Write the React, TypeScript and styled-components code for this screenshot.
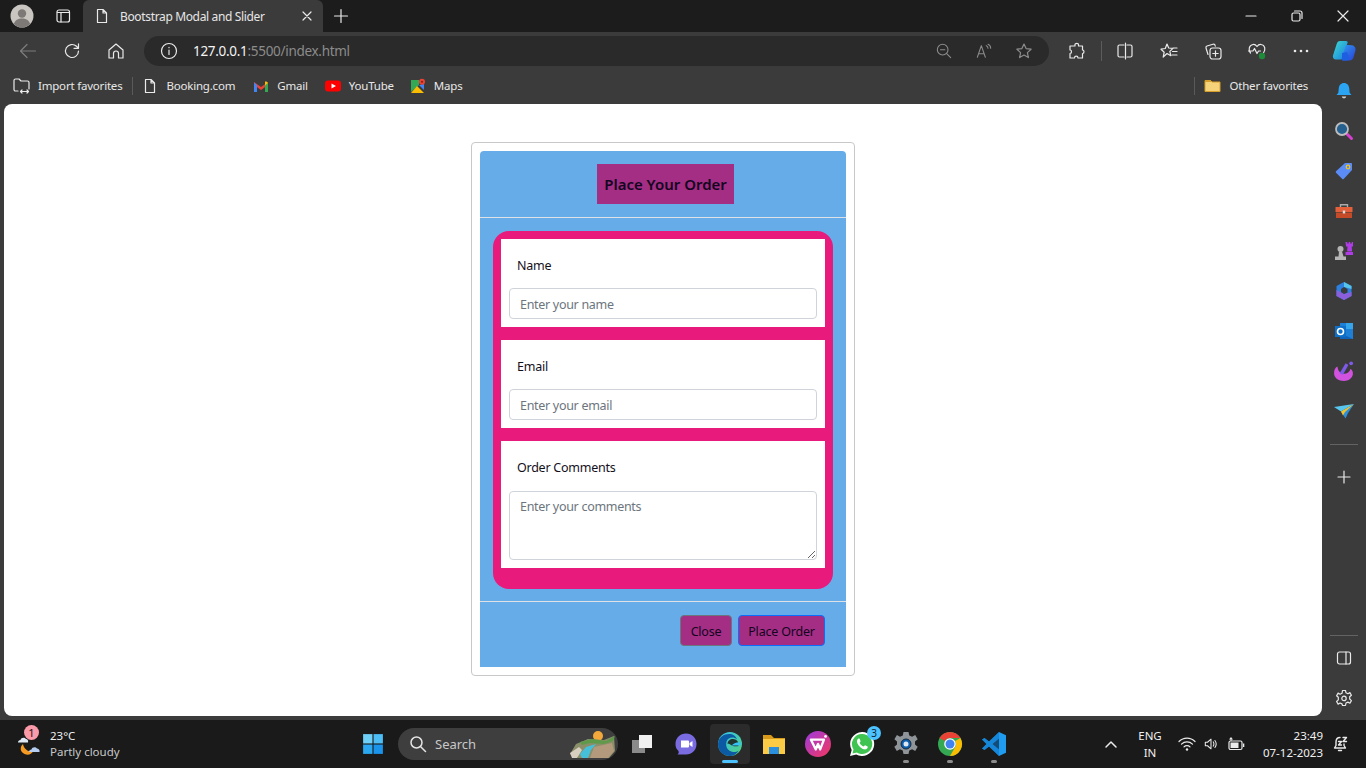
import React from 'react';
import styled, { createGlobalStyle } from 'styled-components';

const GlobalStyle = createGlobalStyle`
  html, body {
    margin: 0;
    padding: 0;
    background: #3b3b3b;
  }
  * {
    box-sizing: border-box;
  }
`;

const UI_FONT = `"Noto Sans", "Open Sans", "Liberation Sans", sans-serif`;

const Screen = styled.div`
  display: flex;
  flex-direction: column;
  width: 1366px;
  height: 768px;
  overflow: hidden;
  font-family: ${UI_FONT};
  color: #eee;
  background: #3b3b3b;
`;

/* title bar */
const TitleBar = styled.div`
  display: flex;
  align-items: flex-end;
  height: 32px;
  background: #1c1c1c;
`;

const TitleSlot = styled.div<{ $w: number }>`
  display: flex;
  align-items: center;
  justify-content: center;
  flex: none;
  width: ${p => p.$w}px;
  height: 32px;
`;

const Tab = styled.div`
  display: flex;
  align-items: center;
  flex: none;
  width: 240px;
  height: 32px;
  margin-left: 1px;
  padding: 0 9px 0 11px;
  background: #3b3b3b;
  border-radius: 6px 6px 0 0;
`;

const TabTitle = styled.span`
  flex: 1;
  margin-left: 10px;
  font-size: 12px;
  letter-spacing: -0.35px;
  color: #e6e6e6;
  white-space: nowrap;
`;

const Spacer = styled.div`
  flex: 1;
`;

/* nav bar */
const NavBar = styled.div`
  display: flex;
  align-items: center;
  height: 40px;
  padding: 0 0 2px 6px;
  background: #3b3b3b;
`;

const NavButton = styled.div<{ $w?: number }>`
  display: flex;
  align-items: center;
  justify-content: center;
  flex: none;
  width: ${p => p.$w ?? 44}px;
  height: 32px;
`;

const AddressBar = styled.div`
  display: flex;
  align-items: center;
  flex: none;
  width: 905px;
  height: 30px;
  margin-left: 6px;
  padding-left: 16px;
  background: #2a2a2a;
  border-radius: 15px;
`;

const Url = styled.div`
  flex: 1;
  margin-left: 15px;
  font-size: 13.5px;
  letter-spacing: -0.3px;
  color: #8c8c8c;
  white-space: nowrap;
`;

const UrlHost = styled.span`
  color: #f4f4f4;
`;

const AddressIcon = styled.div`
  display: flex;
  align-items: center;
  justify-content: center;
  width: 40px;
  height: 30px;
`;

const ToolDivider = styled.div`
  flex: none;
  width: 1px;
  height: 20px;
  background: #5c5c5c;
`;

/* area under the nav bar */
const Middle = styled.div`
  display: flex;
  height: 648px;
`;

const MainColumn = styled.div`
  display: flex;
  flex-direction: column;
  width: 1322px;
`;

const FavBar = styled.div`
  display: flex;
  align-items: center;
  height: 27px;
  margin-bottom: 5px;
  padding: 0 14px 0 13px;
  font-size: 11.5px;
  letter-spacing: -0.2px;
  color: #e8e8e8;
`;

const FavItem = styled.div<{ $ml?: number }>`
  display: flex;
  align-items: center;
  gap: 8px;
  margin-left: ${p => p.$ml ?? 0}px;
  white-space: nowrap;
`;

const FavDivider = styled.div<{ $ml: number }>`
  width: 1px;
  height: 18px;
  margin-left: ${p => p.$ml}px;
  background: #5a5a5a;
`;

const Page = styled.div`
  display: flex;
  justify-content: center;
  align-items: flex-start;
  width: 1318px;
  height: 612px;
  margin-left: 4px;
  padding-top: 38px;
  background: #fff;
  border-radius: 8px;
`;

/* the order modal */
const Modal = styled.div`
  width: 384px;
  height: 534px;
  padding: 8px;
  background: #fff;
  border: 1px solid #c8c8c8;
  border-radius: 4px;
`;

const ModalInner = styled.div`
  display: flex;
  flex-direction: column;
  height: 516px;
  background: #66ace9;
  border-radius: 4px 4px 0 0;
`;

const ModalHeader = styled.div`
  display: flex;
  justify-content: center;
  flex: none;
  height: 67px;
  padding: 13px 0 0 5px;
  border-bottom: 1px solid #dee2e6;
`;

const ModalTitle = styled.h5`
  display: flex;
  align-items: center;
  justify-content: center;
  width: 137px;
  height: 40px;
  margin: 0;
  font-size: 15px;
  font-weight: 600;
  color: #14051f;
  background: #a32e84;
  white-space: nowrap;
`;

const ModalBody = styled.div`
  flex: none;
  height: 384px;
  padding: 13px 13px 12px;
  border-bottom: 1px solid #dee2e6;
`;

const Panel = styled.form`
  display: flex;
  flex-direction: column;
  gap: 13px;
  height: 358px;
  padding: 8px;
  background: #e81b7d;
  border-radius: 16px;
`;

const Field = styled.div`
  padding: 8px;
  background: #fff;
`;

const FieldLabel = styled.label`
  display: block;
  height: 20px;
  margin: 9px 8px 12px;
  font-size: 12.5px;
  line-height: 20px;
  letter-spacing: -0.25px;
  color: #14101a;
`;

const CommentsLabel = styled(FieldLabel)`
  margin-bottom: 13px;
`;

const TextInput = styled.input`
  display: block;
  width: 100%;
  height: 31px;
  padding: 2px 10px 0;
  font-family: ${UI_FONT};
  font-size: 12.5px;
  letter-spacing: -0.3px;
  color: #212529;
  background: #fff;
  border: 1px solid #ced4da;
  border-radius: 4px;
  outline: none;

  &::placeholder {
    color: #6c757d;
  }
`;

const CommentsInput = styled.textarea`
  display: block;
  width: 100%;
  height: 69px;
  padding: 6px 10px;
  font-family: ${UI_FONT};
  font-size: 12.5px;
  letter-spacing: -0.3px;
  color: #212529;
  background: #fff;
  border: 1px solid #ced4da;
  border-radius: 4px;
  outline: none;

  &::placeholder {
    color: #6c757d;
  }
`;

const ModalFooter = styled.div`
  display: flex;
  justify-content: flex-end;
  align-items: flex-start;
  gap: 6px;
  padding: 13px 21px 0 0;
`;

const OrderButton = styled.button<{ $w: number; $edge: string }>`
  width: ${p => p.$w}px;
  height: 31px;
  padding: 1px 0 0;
  font-family: ${UI_FONT};
  font-size: 12.5px;
  letter-spacing: -0.2px;
  color: #14051f;
  background: #a32e84;
  border: 1px solid ${p => p.$edge};
  border-radius: 4px;
`;

/* edge sidebar */
const Sidebar = styled.div`
  display: flex;
  flex-direction: column;
  justify-content: space-between;
  width: 44px;
  margin-top: -1px;
  padding-bottom: 2px;
`;

const SideGroup = styled.div`
  display: flex;
  flex-direction: column;
  align-items: center;
`;

const SideButton = styled.div`
  display: flex;
  align-items: center;
  justify-content: center;
  width: 44px;
  height: 40px;
`;

const SideDivider = styled.div<{ $mt: number; $mb: number }>`
  width: 28px;
  height: 1px;
  margin: ${p => p.$mt}px 0 ${p => p.$mb}px;
  background: #636363;
`;

/* windows taskbar */
const Taskbar = styled.div`
  display: flex;
  align-items: center;
  height: 48px;
  background: #1a1a1a;
`;

const Weather = styled.div`
  display: flex;
  align-items: center;
  flex: none;
  width: 351px;
  padding-left: 17px;
`;

const WeatherIcon = styled.div`
  position: relative;
  width: 28px;
  height: 28px;
`;

const AlertBadge = styled.span`
  position: absolute;
  top: -5px;
  left: 7px;
  width: 15px;
  height: 15px;
  font-size: 11px;
  line-height: 15px;
  text-align: center;
  color: #2a1015;
  background: #fb9aa8;
  border-radius: 50%;
`;

const WeatherText = styled.div`
  margin-left: 5px;
  font-size: 11.5px;
  line-height: 16px;
  color: #f0f0f0;
`;

const WeatherSub = styled.div`
  color: #c8c8c8;
`;

const TaskIcon = styled.div<{ $active?: boolean }>`
  position: relative;
  display: flex;
  align-items: center;
  justify-content: center;
  flex: none;
  width: ${p => (p.$active ? 40 : 44)}px;
  height: 40px;
  margin: 0 ${p => (p.$active ? 2 : 0)}px;
  background: ${p => (p.$active ? '#2b2b2b' : 'transparent')};
  border-radius: 4px;
`;

const RunDot = styled.span<{ $active?: boolean }>`
  position: absolute;
  bottom: 1px;
  left: 50%;
  width: ${p => (p.$active ? 16 : 6)}px;
  height: 3px;
  margin-left: ${p => (p.$active ? -8 : -3)}px;
  background: ${p => (p.$active ? '#4cc2ff' : '#8c8c8c')};
  border-radius: 2px;
`;

const CountBadge = styled.span`
  position: absolute;
  top: 2px;
  right: 3px;
  width: 14px;
  height: 14px;
  font-size: 10px;
  line-height: 14px;
  text-align: center;
  color: #10212e;
  background: #4cc2ff;
  border-radius: 50%;
`;

const SearchBox = styled.div`
  display: flex;
  align-items: center;
  flex: none;
  width: 220px;
  height: 32px;
  margin: 0 2px 0 3px;
  padding: 0 2px 0 11px;
  background: #3e3e3e;
  border-radius: 16px;
`;

const SearchLabel = styled.span`
  flex: 1;
  margin-left: 8px;
  font-size: 13px;
  color: #c8c8c8;
`;

const Tray = styled.div`
  display: flex;
  align-items: center;
  flex: 1;
  padding-left: 87px;
`;

const LangBox = styled.div`
  width: 40px;
  margin-left: 11px;
  font-size: 11.5px;
  line-height: 17px;
  text-align: center;
  color: #f0f0f0;
`;

const Clock = styled.div`
  width: 69px;
  font-size: 11.5px;
  line-height: 17px;
  text-align: right;
  color: #f0f0f0;
`;

const TrayIcon = styled.div<{ $w: number }>`
  display: flex;
  align-items: center;
  justify-content: center;
  flex: none;
  width: ${p => p.$w}px;
`;

/* icons */
const line = { fill: 'none', stroke: '#eaeaea', strokeWidth: 1.2, strokeLinecap: 'round', strokeLinejoin: 'round' } as const;
const dimLine = { ...line, stroke: '#8c8c8c' };

const DocIcon = () => (
  <svg width="16" height="16" viewBox="0 0 16 16">
    <path {...line} d="M3.500 1.500h5.500l3.500 3.500v9.500h-9zM9 1.500v3.500h3.500" />
  </svg>
);

const Avatar = () => (
  <svg width="24" height="24" viewBox="0 0 24 24">
    <circle cx="12" cy="12" r="11.500" fill="#c9c5c1" />
    <circle cx="12" cy="9.500" r="4.200" fill="#7d7976" />
    <path fill="#7d7976" d="M3.800 20c1.200-4 4.400-5.600 8.200-5.600s7 1.600 8.200 5.600a11.500 11.500 0 0 1-16.400 0z" />
  </svg>
);

const StarPath = 'M9 2l2.100 4.600 5 .6-3.700 3.400 1 5L9 13.100l-4.400 2.500 1-5L1.900 7.200l5-.6z';

const CopilotLogo = () => (
  <svg width="26" height="26" viewBox="0 0 26 26">
    <defs>
      <linearGradient id="cpA" x1="0" y1="0" x2="1" y2="1">
        <stop offset="0" stopColor="#3ddbd0" />
        <stop offset="1" stopColor="#1a7de0" />
      </linearGradient>
      <linearGradient id="cpB" x1="0" y1="0" x2="1" y2="1">
        <stop offset="0" stopColor="#2f9cf0" />
        <stop offset="1" stopColor="#2a3fd8" />
      </linearGradient>
    </defs>
    <path fill="url(#cpA)" d="M9 3h6c1.500 0 2 1 1.500 2l-5 15c-.4 1-1.200 1.500-2.500 1.500H5c-2.500 0-3.500-2-3-4l3.500-11C6 4 7.500 3 9 3z" />
    <path fill="url(#cpB)" d="M15 7h3l2 .2c3 0 5 2 4.500 5l-2 7c-.6 2.300-2 3.300-4 3.300h-6c-1.500 0-2.300-1-2-2.200z" />
    <path fill="#1e5ee0" d="M11 15l5-1 2 5c.5 2-.5 3.500-2.500 3.500H11z" />
  </svg>
);

const Bell = () => (
  <svg width="18" height="18" viewBox="0 0 20 20">
    <path fill="#2ba4f3" d="M10 1c3.500 0 5.500 2.500 5.800 6l.5 5 2 2.500H1.700l2-2.500.5-5C4.500 3.500 6.500 1 10 1z" />
    <path fill="#cfcfcf" d="M7.500 16.200h5a2.500 2 0 0 1-5 0z" />
  </svg>
);

const Lens = () => (
  <svg width="20" height="20" viewBox="0 0 20 20">
    <path stroke="#d63fd0" strokeWidth="3" strokeLinecap="round" d="M12.500 12.500l5 5" />
    <circle cx="8" cy="8" r="6" fill="#25608f" stroke="#bdbdbd" strokeWidth="1.800" />
  </svg>
);

const Tag = () => (
  <svg width="20" height="20" viewBox="0 0 20 20">
    <path fill="#5b8cf5" d="M11 2h6c.6 0 1 .4 1 1v6L9.700 18c-.4.4-1 .4-1.400 0L2 11.700c-.4-.4-.4-1 0-1.400z" />
    <circle cx="14" cy="6" r="1.800" fill="#5b8cf5" stroke="#f5c518" strokeWidth="1.200" />
  </svg>
);

const Toolbox = () => (
  <svg width="20" height="20" viewBox="0 0 20 20">
    <path fill="none" stroke="#aaa" strokeWidth="1.400" d="M6.500 6V3.800h7V6" />
    <path fill="#e2603a" d="M1.500 6h17v5h-17z" />
    <path fill="#c44a28" d="M2 11.500h16V17H2z" />
    <path fill="#ddd" d="M8.800 9.500h2.400v3H8.800z" />
  </svg>
);

const Chess = () => (
  <svg width="20" height="20" viewBox="0 0 20 20">
    <circle cx="6.500" cy="8" r="3" fill="#b5b5b5" />
    <path fill="#b5b5b5" d="M5 10.500h3l1.500 5h-5zM1 15.500h11V19H1z" />
    <path fill="#b03ce8" d="M11.500 1h1.800v1.600h1.400V1h1.600v1.600h1.400V1H19v4.500h-1.300l.4 5h-5l.4-5h-1.500zM11.500 11H19v3h-7.500z" />
  </svg>
);

const M365 = () => (
  <svg width="20" height="20" viewBox="0 0 20 20">
    <path fill="#2d7fe0" d="M10 1l7.500 4v10l-7.500 4-7.500-4V5z" />
    <path fill="#8b5fdc" d="M2.500 9l7.500 4 7.500-2v4L10 19l-7.500-4z" />
    <path fill="#55c4e8" d="M10 1l7.500 4v3L10 6z" />
    <path fill="#3b3b3b" d="M7 8l3-2 3.500 2v3.500L10 13l-3-2z" />
  </svg>
);

const Outlook = () => (
  <svg width="20" height="20" viewBox="0 0 20 20">
    <path fill="#1d7fd6" d="M6 2h13v16H6z" />
    <path fill="#36a6ec" d="M12 2h7v6h-7z" />
    <path fill="#0f63b8" d="M6 12l13 6H6z" />
    <path fill="#0e6fc9" d="M1 5h11v11H1z" />
    <circle cx="6.500" cy="10.500" r="3" fill="none" stroke="#fff" strokeWidth="1.600" />
  </svg>
);

const Designer = () => (
  <svg width="22" height="22" viewBox="0 0 20 20">
    <path fill="#d252e0" d="M1 12c0-3 1-5 3-6 .5 4 2.500 6.500 6 6.500 3 0 5-1.500 6-4.500 1.500 1.500 2.500 3 2 5.500-.8 3.500-4 5.500-8 5.500-5 0-9-2.500-9-7z" />
    <path fill="#7f5ae8" d="M6 12L11.500 3l2.500 1.500L9 13.500z" />
    <circle cx="16.500" cy="3" r="1.700" fill="#7f5ae8" />
  </svg>
);

const Plane = () => (
  <svg width="22" height="20" viewBox="0 0 22 20">
    <path fill="#58c7f0" d="M1 6L21 3 8 10.500z" />
    <path fill="#2c8fdc" d="M21 3l-6 9-2.500 5.500L8 10.500z" />
    <path fill="#f5c32c" d="M21 3L8 10.500l2 4L12 11z" />
  </svg>
);

const WeatherArt = () => (
  <svg width="28" height="28" viewBox="0 0 28 28">
    <path fill="#f59a23" d="M6 14c1 5 5 8 10 7.500-1.500 3-5 4-8.500 2.500C3 22 2.500 17 6 14z" />
    <path fill="#dfe8f5" d="M1 12.500c0-1.500 1-2.500 2.500-2.500.5-2.500 4-3.200 5.500-1 1.500 0 2.500 1.500 2 3.500z" />
    <path fill="#b5cdf0" d="M12 22c0-1.500 1-2.500 2.500-2.500.5-2.500 4-3 5.500-1 1.500 0 3 1.500 2.500 3.500z" />
  </svg>
);

const StartLogo = () => (
  <svg width="22" height="22" viewBox="0 0 20 20">
    <path fill="#6fd0f7" d="M1 1h8.500v8.500H1z" />
    <path fill="#4cbdf5" d="M10.500 1H19v8.500h-8.500z" />
    <path fill="#2aa7ef" d="M1 10.500h8.500V19H1z" />
    <path fill="#1a93ea" d="M10.500 10.500H19V19h-8.500z" />
  </svg>
);

const Scenery = () => (
  <svg width="48" height="30" viewBox="0 0 48 30">
    <circle cx="30" cy="7" r="5" fill="#f2a83a" />
    <path fill="#8a8f6a" d="M2 25L8 15l12-5 16 1 10-4 1 15-6 7H10z" />
    <path fill="#5e9a4a" d="M12 13l12-3 14 2 9-5-2 5-9 3-14-1-8 2z" />
    <path fill="#46c0d8" d="M12 25l6-7 10-3-5 6-3 8h-6z" />
    <path fill="#b49a7c" d="M26 18l18-4 2 8-6 7H22z" />
    <path fill="#d8cfc0" d="M2 24l9-6 3 3-5 8H4z" />
  </svg>
);

const TaskView = () => (
  <svg width="24" height="24" viewBox="0 0 24 24">
    <path fill="#8a8a8a" d="M2 8h13v13H2z" />
    <path fill="#f0f0f0" d="M9 3h13v13H9z" />
  </svg>
);

const MeetIcon = () => (
  <svg width="24" height="24" viewBox="0 0 24 24">
    <path fill="#7a6be0" d="M12 1.500c6 0 10.500 4.500 10.500 10.500S18 22.500 12 22.500H3.500c2-1.800 1.500-3-.3-5C1.800 15.800 1.500 14 1.500 12 1.500 6 6 1.500 12 1.500z" />
    <path fill="#fff" d="M7 8.500h7a1 1 0 0 1 1 1v5a1 1 0 0 1-1 1H7zM15.500 11l3-2v6l-3-2z" />
  </svg>
);

const EdgeLogo = () => (
  <svg width="26" height="26" viewBox="0 0 26 26">
    <defs>
      <linearGradient id="edA" x1="0" y1="0" x2="1" y2="1">
        <stop offset="0" stopColor="#35c1f1" />
        <stop offset="1" stopColor="#52d17c" />
      </linearGradient>
    </defs>
    <circle cx="13" cy="13" r="12" fill="url(#edA)" />
    <path fill="#0c59a4" d="M1 13C1.500 6 7 3 12 3c4 0 7 2 8 5.500-3-3-9-2.500-10.500 2-1.500 5 1.500 10 6.500 10.500 2 .2 4-.2 5.500-1.200C19 24 15.500 25 13 25 6 25 1 20 1 13z" />
    <path fill="#1a1a1a" d="M10.500 13c0-3 2.500-5 5.500-5 2 0 4 1 5 3l.5 4c-2 .5-6 .5-7.500-1-1.500-1.500-3.500-1.500-3.500-1z" opacity="0.85" />
    <path fill="#35c1f1" d="M14.500 14.500h9c.5-.8.5-2 .2-3-2-.5-6-.5-9.200 3z" />
  </svg>
);

const FolderIcon = () => (
  <svg width="26" height="26" viewBox="0 0 26 26">
    <path fill="#d99a1c" d="M2 4h8l3 3h11v3H2z" />
    <path fill="#fbcb45" d="M2 8h22v15H2z" />
    <path fill="#2b8fe0" d="M8 16h10v7H8z" />
  </svg>
);

const WpsIcon = () => (
  <svg width="26" height="26" viewBox="0 0 24 24">
    <defs>
      <linearGradient id="wps" x1="0" y1="0" x2="1" y2="1">
        <stop offset="0" stopColor="#9a3be0" />
        <stop offset="1" stopColor="#f5365c" />
      </linearGradient>
    </defs>
    <circle cx="12" cy="12" r="12" fill="url(#wps)" />
    <path fill="none" stroke="#fff" strokeWidth="2.200" strokeLinejoin="round" d="M5.500 8h12l-3.500 9-2-5-2 5z" />
    <circle cx="19" cy="5" r="1.300" fill="#fff" />
  </svg>
);

const WhatsappIcon = () => (
  <svg width="26" height="26" viewBox="0 0 26 26">
    <path fill="#fff" d="M13 1a12 12 0 0 0-10.300 18L1 25l6.200-1.600A12 12 0 1 0 13 1z" />
    <path fill="#3fc351" d="M13 3a10 10 0 0 0-8.500 15.300L3.500 22.500l4.300-1.100A10 10 0 1 0 13 3z" />
    <path fill="#fff" d="M9.500 7.500c-1 .5-1.800 2-1.500 3.500.6 3 4 6.500 7 7.300 1.700.4 3-.3 3.600-1.500.2-.5.200-1 0-1.200l-2.500-1.300c-.4 0-1 1.200-1.500 1.300-1.500-.4-3.500-2.300-4-3.800 0-.5 1-1 1-1.500l-1-2.500c-.3-.4-1-.5-1.100-.3z" />
  </svg>
);

const GearColor = () => (
  <svg width="26" height="26" viewBox="0 0 26 26">
    <path fill="#8f9499" d="M10.500 1h5l.8 3.500 2.800 1.200 3.100-1.800 2.500 4.300-2.700 2.300v3l2.700 2.300-2.500 4.300-3.100-1.800-2.800 1.200-.8 3.500h-5l-.8-3.500-2.800-1.200-3.100 1.800-2.500-4.300 2.700-2.300v-3L1.400 8.200l2.500-4.300L7 5.700l2.800-1.200z" />
    <circle cx="13" cy="13" r="5" fill="#0d5fae" stroke="#16273a" strokeWidth="1" />
    <circle cx="13" cy="13" r="2.500" fill="#dfe8f0" />
  </svg>
);

const ChromeIcon = () => (
  <svg width="26" height="26" viewBox="0 0 26 26">
    <circle cx="13" cy="13" r="12" fill="#34a853" />
    <path fill="#ea4335" d="M13 1a12 12 0 0 1 10.400 6H13a6 6 0 0 0-5.200 3L2.600 7A12 12 0 0 1 13 1z" />
    <path fill="#fbbc04" d="M23.400 7A12 12 0 0 1 13 25l5.200-9a6 6 0 0 0 0-6z" />
    <circle cx="13" cy="13" r="5.800" fill="#fff" />
    <circle cx="13" cy="13" r="4.500" fill="#3f82f0" />
  </svg>
);

const VsCodeIcon = () => (
  <svg width="26" height="26" viewBox="0 0 26 26">
    <path fill="#1f9cf0" d="M18 1l7 3.300v17.400L18 25 8 15.500 3.500 19 1 17.500 5.500 13 1 8.500 3.500 7 8 10.500zM18 7.500L11.500 13l6.500 5.500z" />
    <path fill="#0e76c4" d="M18 1l-10 9.500L3.500 7 1 8.500 5.500 13 1 17.500 3.500 19 8 15.500 18 25z" opacity="0.55" />
  </svg>
);

const sideIcons = [Bell, Lens, Tag, Toolbox, Chess, M365, Outlook, Designer, Plane];

export default function App() {
  return (
    <Screen>
      <GlobalStyle />
      <TitleBar>
        <TitleSlot $w={44}><Avatar /></TitleSlot>
        <TitleSlot $w={38}>
          <svg width="16" height="16" viewBox="0 0 16 16">
            <rect {...line} x="2" y="2" width="12.500" height="12" rx="2" />
            <path {...line} d="M2.500 4.500h11.500M6 4.500V14" />
          </svg>
        </TitleSlot>
        <Tab>
          <DocIcon />
          <TabTitle>Bootstrap Modal and Slider</TabTitle>
          <svg width="14" height="14" viewBox="0 0 14 14">
            <path {...line} d="M3 3l8 8M11 3l-8 8" />
          </svg>
        </Tab>
        <TitleSlot $w={36}>
          <svg width="16" height="16" viewBox="0 0 16 16">
            <path {...line} d="M8 1.500v13M1.500 8h13" />
          </svg>
        </TitleSlot>
        <Spacer />
        <TitleSlot $w={46}>
          <svg width="12" height="12" viewBox="0 0 12 12"><path {...line} d="M1 6h10" /></svg>
        </TitleSlot>
        <TitleSlot $w={46}>
          <svg width="12" height="12" viewBox="0 0 12 12">
            <rect {...line} x="1" y="3" width="8" height="8" rx="1.500" />
            <path {...line} d="M3.500 1h5.500a2 2 0 0 1 2 2v5.500" />
          </svg>
        </TitleSlot>
        <TitleSlot $w={46}>
          <svg width="12" height="12" viewBox="0 0 12 12"><path {...line} d="M1 1l10 10M11 1L1 11" /></svg>
        </TitleSlot>
      </TitleBar>

      <NavBar>
        <NavButton>
          <svg width="18" height="18" viewBox="0 0 18 18"><path {...line} stroke="#7d7d7d" d="M1.500 9h15M8 2.500L1.500 9 8 15.500" /></svg>
        </NavButton>
        <NavButton>
          <svg width="18" height="18" viewBox="0 0 18 18"><path {...line} d="M15.500 9a6.500 6.500 0 1 1-2-4.700L15.500 6.300M15.500 1.800v4.500H11" /></svg>
        </NavButton>
        <NavButton>
          <svg width="18" height="18" viewBox="0 0 18 18"><path {...line} d="M2 8l7-6 7 6v8h-4.500v-4.500a2.500 2.500 0 0 0-5 0V16H2z" /></svg>
        </NavButton>
        <AddressBar>
          <svg width="18" height="18" viewBox="0 0 18 18">
            <circle {...line} cx="9" cy="9" r="7.500" />
            <path {...line} d="M9 8v4.500M9 5.300v.4" />
          </svg>
          <Url><UrlHost>127.0.0.1</UrlHost>:5500/index.html</Url>
          <AddressIcon>
            <svg width="16" height="16" viewBox="0 0 18 18">
              <circle {...dimLine} cx="7.500" cy="7.500" r="6" />
              <path {...dimLine} d="M5 7.500h5M12 12l4.500 4.500" />
            </svg>
          </AddressIcon>
          <AddressIcon>
            <svg width="16" height="16" viewBox="0 0 18 18">
              <path {...dimLine} d="M1.500 16L6 3l4.500 13M3 12h6M11.500 3c1.500.5 2 1.500 2 3M13.500 1.500c2 .8 3 2.500 3 4.500" />
            </svg>
          </AddressIcon>
          <AddressIcon>
            <svg width="18" height="18" viewBox="0 0 18 18"><path {...dimLine} d={StarPath} /></svg>
          </AddressIcon>
          <NavButton $w={5} />
        </AddressBar>
        <NavButton $w={8} />
        <NavButton $w={40}>
          <svg width="18" height="18" viewBox="0 0 18 18">
            <path {...line} d="M7 2.500c0-1.500 3.500-1.500 3.500 0V4h4v4c2 0 2 3.500 0 3.500V16H10c0-2.500-3.500-2.500-3.500 0H2v-4.500c2 0 2-3.500 0-3.500V4h5z" />
          </svg>
        </NavButton>
        <NavButton $w={4} />
        <ToolDivider />
        <NavButton $w={1} />
        <NavButton $w={44}>
          <svg width="18" height="18" viewBox="0 0 18 18">
            <path {...line} d="M8 3H3.500A1.500 1.500 0 0 0 2 4.500v9A1.500 1.500 0 0 0 3.500 15H8M11 3h3.500A1.500 1.500 0 0 1 16 4.500v9a1.500 1.500 0 0 1-1.500 1.500H11M9.500 1v16" />
          </svg>
        </NavButton>
        <NavButton $w={44}>
          <svg width="18" height="18" viewBox="0 0 18 18">
            <path {...line} d="M7 2l1.700 4 4.300.4-3.200 3 1 4.300L7 11.500 3.200 15l1-4.800L1 7.200 5.300 6.500zM13 6h4M12.500 9.500H17M12 13h5" />
          </svg>
        </NavButton>
        <NavButton $w={44}>
          <svg width="18" height="18" viewBox="0 0 18 18">
            <path {...line} d="M4 12.500L2 6c-.3-1 .2-1.700 1-2l6-1.800c1-.3 1.800.2 2 1l.3 1" />
            <rect {...line} x="6" y="6" width="11" height="11" rx="2.500" />
            <path {...line} d="M11.500 8.800v5.400M8.800 11.500h5.400" />
          </svg>
        </NavButton>
        <NavButton $w={44}>
          <svg width="20" height="20" viewBox="0 0 20 20">
            <path {...line} d="M3.500 12C1 9 2 4 6 3.500c1.800-.2 3 .6 4 2 1-1.400 2.200-2.200 4-2 4 .5 5 5 2.500 8.500M1.500 10H6l1.500-2.500 2.500 5 1.500-2.500h2" />
            <circle cx="15" cy="15" r="3.200" fill="#1f8a3a" />
          </svg>
        </NavButton>
        <NavButton $w={44}>
          <svg width="16" height="4" viewBox="0 0 16 4">
            <circle cx="2" cy="2" r="1.300" fill="#eaeaea" />
            <circle cx="8" cy="2" r="1.300" fill="#eaeaea" />
            <circle cx="14" cy="2" r="1.300" fill="#eaeaea" />
          </svg>
        </NavButton>
        <NavButton $w={42}><CopilotLogo /></NavButton>
      </NavBar>

      <Middle>
        <MainColumn>
          <FavBar>
            <FavItem>
              <svg width="17" height="17" viewBox="0 0 17 17">
                <path {...line} d="M5 14H2.500A1.500 1.500 0 0 1 1 12.500v-9A1.500 1.500 0 0 1 2.500 2H6l2 2h6.500A1.500 1.500 0 0 1 16 5.500V12M7.500 14.500h8M9 13l-1.500 1.500L9 16M14 13l1.500 1.500L14 16" />
              </svg>
              Import favorites
            </FavItem>
            <FavDivider $ml={10} />
            <FavItem $ml={9}><DocIcon />Booking.com</FavItem>
            <FavItem $ml={18}>
              <svg width="16" height="16" viewBox="0 0 16 16">
                <path fill="#ea4335" d="M1 4l7 5 7-5v3L8 12 1 7z" />
                <path fill="#4285f4" d="M1 4.500V14h3V7z" />
                <path fill="#34a853" d="M15 4.500V14h-3V7z" />
                <path fill="#fbbc04" d="M12 3.500h1.500L15 5l-3 2.500z" />
              </svg>
              Gmail
            </FavItem>
            <FavItem $ml={17}>
              <svg width="16" height="16" viewBox="0 0 16 16">
                <rect x="0" y="2.500" width="16" height="11" rx="3" fill="#f00" />
                <path fill="#fff" d="M6.500 5.500L11 8l-4.500 2.500z" />
              </svg>
              YouTube
            </FavItem>
            <FavItem $ml={16}>
              <svg width="16" height="16" viewBox="0 0 16 16">
                <path fill="#34a853" d="M1 2h8v5L1 14z" />
                <path fill="#fbbc04" d="M1 15l6-7 7 7z" />
                <path fill="#4285f4" d="M9 7l5 5V6z" />
                <circle cx="12" cy="3.800" r="3" fill="#ea4335" />
                <circle cx="12" cy="3.800" r="1" fill="#7b1d14" />
              </svg>
              Maps
            </FavItem>
            <Spacer />
            <FavDivider $ml={0} />
            <FavItem $ml={9}>
              <svg width="17" height="17" viewBox="0 0 17 17">
                <path fill="#f5d37a" stroke="#d69f2b" d="M1 3.500h5.500l1.500 1.500h8v9.500H1z" />
                <path fill="#d69f2b" d="M1 3h5.500l1.500 2H1z" />
              </svg>
              Other favorites
            </FavItem>
          </FavBar>
          <Page>
            <Modal>
              <ModalInner>
                <ModalHeader>
                  <ModalTitle>Place Your Order</ModalTitle>
                </ModalHeader>
                <ModalBody>
                  <Panel>
                    <Field>
                      <FieldLabel htmlFor="name">Name</FieldLabel>
                      <TextInput id="name" type="text" placeholder="Enter your name" />
                    </Field>
                    <Field>
                      <FieldLabel htmlFor="email">Email</FieldLabel>
                      <TextInput id="email" type="email" placeholder="Enter your email" />
                    </Field>
                    <Field>
                      <CommentsLabel htmlFor="comments">Order Comments</CommentsLabel>
                      <CommentsInput id="comments" placeholder="Enter your comments" />
                    </Field>
                  </Panel>
                </ModalBody>
                <ModalFooter>
                  <OrderButton type="button" $w={52} $edge="#6c757d">Close</OrderButton>
                  <OrderButton type="button" $w={87} $edge="#0d6efd">Place Order</OrderButton>
                </ModalFooter>
              </ModalInner>
            </Modal>
          </Page>
        </MainColumn>
        <Sidebar>
          <SideGroup>
            {sideIcons.map((Icon, i) => (
              <SideButton key={i}><Icon /></SideButton>
            ))}
            <SideDivider $mt={13} $mb={12} />
            <SideButton>
              <svg width="14" height="14" viewBox="0 0 14 14"><path {...line} d="M7 1v12M1 7h12" /></svg>
            </SideButton>
          </SideGroup>
          <SideGroup>
            <SideDivider $mt={0} $mb={2} />
            <SideButton>
              <svg width="16" height="16" viewBox="0 0 16 16">
                <rect {...line} x="1.500" y="2" width="13" height="12" rx="2" />
                <path {...line} d="M10 2v12" />
              </svg>
            </SideButton>
            <SideButton>
              <svg width="18" height="18" viewBox="0 0 18 18">
                <path {...line} d="M7.500 1.500h3l.5 2.300 1.900.9 2-1.100 1.500 2.600-1.700 1.600v2.200l1.700 1.600-1.500 2.600-2-1.100-1.900.9-.5 2.500h-3L7 14.900l-1.900-.9-2 1.100-1.500-2.600 1.700-1.600V8.300L1.600 6.700l1.500-2.600 2 1.100L7 4.300z" />
                <circle {...line} cx="9" cy="9.400" r="2.200" />
              </svg>
            </SideButton>
          </SideGroup>
        </Sidebar>
      </Middle>

      <Taskbar>
        <Weather>
          <WeatherIcon>
            <WeatherArt />
            <AlertBadge>1</AlertBadge>
          </WeatherIcon>
          <WeatherText>
            23°C
            <WeatherSub>Partly cloudy</WeatherSub>
          </WeatherText>
        </Weather>
        <TaskIcon><StartLogo /></TaskIcon>
        <SearchBox>
          <svg width="18" height="18" viewBox="0 0 18 18">
            <circle fill="none" stroke="#e4e4e4" strokeWidth="1.500" cx="7.500" cy="7.500" r="5.500" />
            <path stroke="#e4e4e4" strokeWidth="1.500" strokeLinecap="round" d="M11.500 11.500l5 5" />
          </svg>
          <SearchLabel>Search</SearchLabel>
          <Scenery />
        </SearchBox>
        <TaskIcon><TaskView /></TaskIcon>
        <TaskIcon><MeetIcon /></TaskIcon>
        <TaskIcon $active><EdgeLogo /><RunDot $active /></TaskIcon>
        <TaskIcon><FolderIcon /></TaskIcon>
        <TaskIcon><WpsIcon /></TaskIcon>
        <TaskIcon><WhatsappIcon /><CountBadge>3</CountBadge></TaskIcon>
        <TaskIcon><GearColor /><RunDot /></TaskIcon>
        <TaskIcon><ChromeIcon /><RunDot /></TaskIcon>
        <TaskIcon><VsCodeIcon /><RunDot /></TaskIcon>
        <Tray>
          <TrayIcon $w={16}>
            <svg width="14" height="10" viewBox="0 0 14 10"><path {...line} strokeWidth={1.500} d="M2 8l5-5 5 5" /></svg>
          </TrayIcon>
          <LangBox>ENG<br />IN</LangBox>
          <TrayIcon $w={34}>
            <svg width="18" height="16" viewBox="0 0 18 16">
              <path {...line} d="M1 5.500c4.500-4.500 11.500-4.500 16 0M3.500 8.200c3-3 8-3 11 0M6 10.800c1.600-1.600 4.400-1.600 6 0" />
              <circle cx="9" cy="13.500" r="1.200" fill="#eaeaea" />
            </svg>
          </TrayIcon>
          <TrayIcon $w={14}>
            <svg width="16" height="16" viewBox="0 0 16 16">
              <path {...line} d="M1.500 6h2.500l4-3.500v11L4 10H1.500zM10.500 5.500c1 1.500 1 3.500 0 5M12.500 4c1.800 2.500 1.800 5.500 0 8" />
            </svg>
          </TrayIcon>
          <TrayIcon $w={36}>
            <svg width="18" height="16" viewBox="0 0 18 16">
              <rect {...line} x="2" y="5" width="13" height="8.500" rx="1.500" />
              <path fill="#eaeaea" d="M3.500 6.500h8v5.500h-8zM16 7.500h1.300v3.500H16zM4 1l2 2.500H4.500V5H3.500V3.500H2z" />
            </svg>
          </TrayIcon>
          <Clock>23:49<br />07-12-2023</Clock>
          <TrayIcon $w={34}>
            <svg width="18" height="18" viewBox="0 0 18 18">
              <path {...line} strokeWidth={1.400} d="M9 2.500c-3 0-4 2-4 4.500v3.500L3.500 13h11L13 10.500V9" />
              <path {...line} strokeWidth={1.400} d="M7.500 15.500h3M7.500 6.500h3L7.500 10h3M12 2.500h3.500L12 6.500h3.500" />
            </svg>
          </TrayIcon>
        </Tray>
      </Taskbar>
    </Screen>
  );
}
